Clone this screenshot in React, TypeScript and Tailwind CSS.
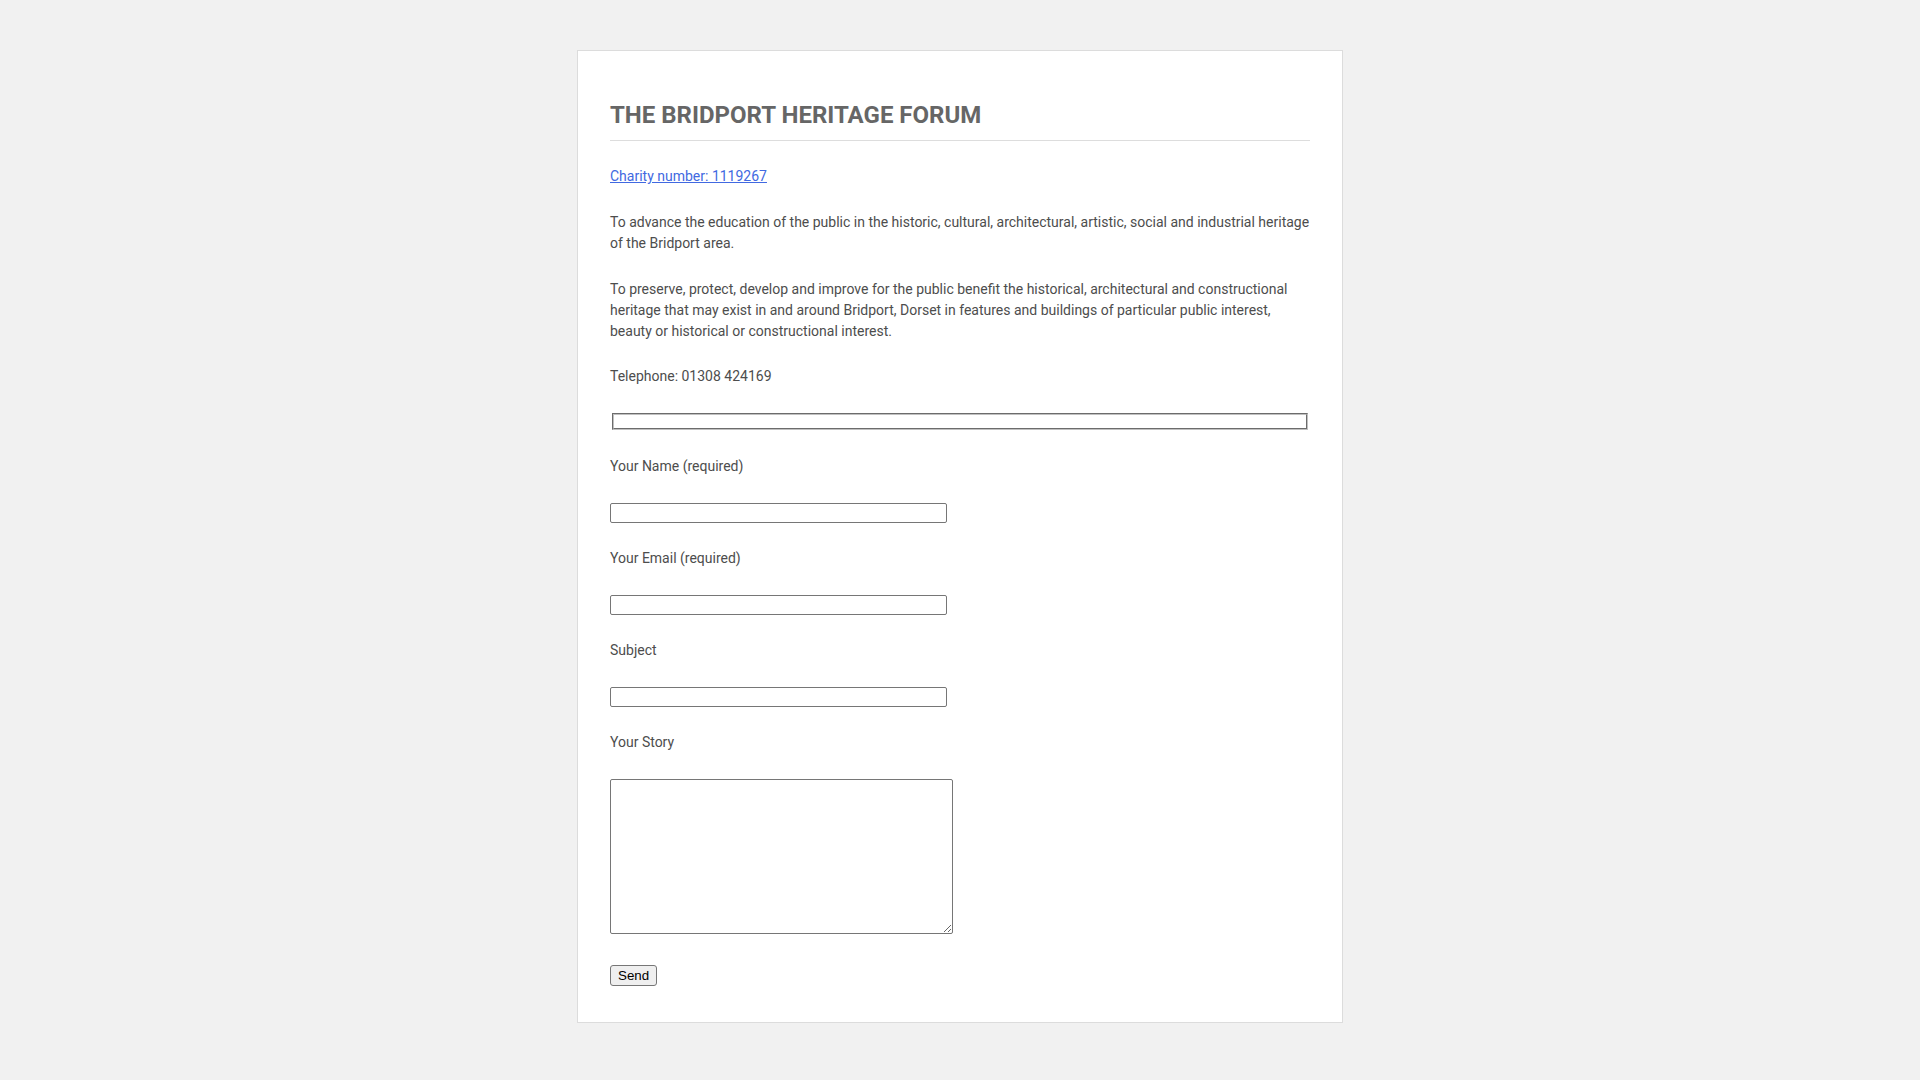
import React from 'react';

const fields = [
  { label: 'Your Name (required)', type: 'text' },
  { label: 'Your Email (required)', type: 'email' },
  { label: 'Subject', type: 'text' },
];

export default function App() {
  return (
    <div className="min-h-screen bg-[#f1f1f1] pt-[50px] pb-[58px] font-['Roboto','Liberation_Sans',sans-serif] text-[14px] leading-[21px] text-[#4d4d4d]">
      <div className="mx-auto w-[766px] bg-white border border-[#dcdcdc] px-8 pt-[50px] pb-[36px]">
        <h1 className="text-[24px] leading-[29px] font-bold uppercase text-[#666] pb-[10px] border-b border-[#dddddd]">
          The Bridport Heritage Forum
        </h1>

        <p className="mt-[25px]">
          <a href="#" className="text-[#4169e1] underline">
            Charity number: 1119267
          </a>
        </p>
        <p className="mt-[25px]">
          To advance the education of the public in the historic, cultural, architectural, artistic, social and industrial heritage of the Bridport area.
        </p>
        <p className="mt-[25px]">
          To preserve, protect, develop and improve for the public benefit the historical, architectural and constructional heritage that may exist in and around Bridport, Dorset in features and buildings of particular public interest, beauty or historical or constructional interest.
        </p>
        <p className="mt-[24px]">Telephone: 01308 424169</p>

        {/* empty fieldset */}
        <div className="mt-[26px] mx-[2px] h-[17px] border-2 [border-style:groove] border-[#c0c0c0]"></div>

        <form className="flex flex-col items-start" onSubmit={(e) => e.preventDefault()}>
          {fields.map((f, i) => (
            <div key={f.label} className={i === 0 ? 'mt-[25.5px]' : 'mt-[24.5px]'}>
              <label className="block">{f.label}</label>
              <input
                type={f.type}
                className="mt-[26.5px] block w-[337px] h-[20px] border border-[#767676] rounded-[2px] bg-white px-[2px] text-[13px] outline-none"
              />
            </div>
          ))}

          <div className="mt-[24.5px]">
            <label className="block">Your Story</label>
            <textarea className="mt-[26.5px] block w-[343px] h-[155px] border border-[#767676] rounded-[2px] bg-white resize outline-none"></textarea>
          </div>

          <button
            type="submit"
            className="mt-[31px] h-[21px] px-[7px] border border-[#767676] rounded-[3px] bg-[#efefef] text-[13.33px] leading-[19px] font-normal text-black font-['Liberation_Sans',Arial,sans-serif]"
          >
            Send
          </button>
        </form>
      </div>
    </div>
  );
}
